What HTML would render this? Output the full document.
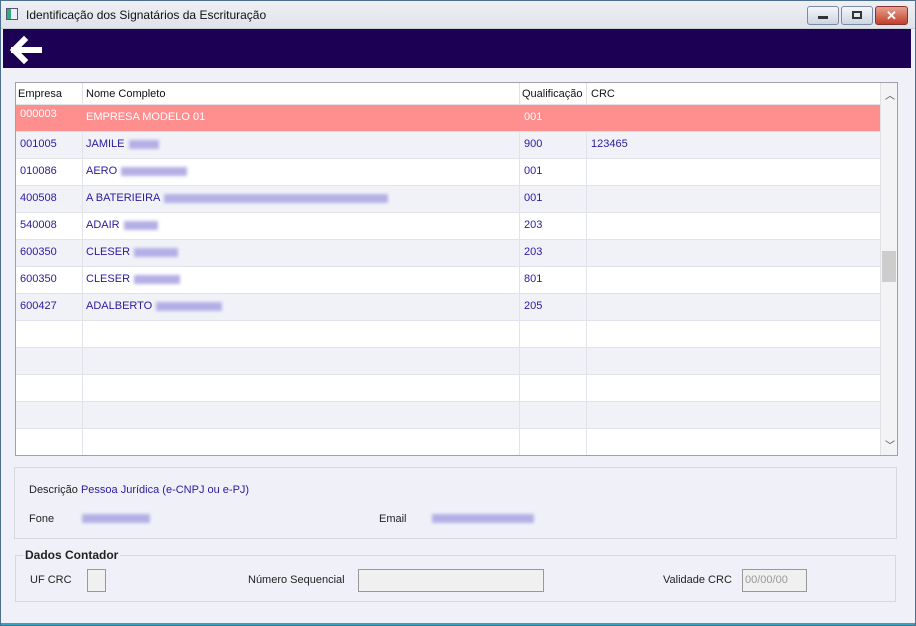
<!DOCTYPE html><html><head><style>
*{margin:0;padding:0;box-sizing:border-box}
body{width:916px;height:626px;overflow:hidden;font-family:"Liberation Sans",sans-serif;font-size:11px;background:#6a8fb0;position:relative}
.win{position:absolute;left:0;top:0;width:916px;height:626px;background:#f0f1f8;box-shadow:inset 0 0 0 1px #4a6f90,inset 0 -3px 0 #3aa0c0}
.title{position:absolute;left:1px;top:1px;width:914px;height:28px;background:linear-gradient(#eef0f4,#dfe3ea);border-bottom:1px solid #c8ccd4}
.title span{position:absolute;left:25px;top:7px;font-size:12px;color:#111}
.ico{position:absolute;left:5px;top:7px;width:12px;height:12px;border:1px solid #557;background:linear-gradient(90deg,#3a7 0 40%,#eef 40%)}
.btn{position:absolute;top:5px;height:19px;border:1px solid #7a8aa0;border-radius:3px;background:linear-gradient(#f4f6fa,#cdd5e2)}
.hdr{position:absolute;left:3px;top:29px;width:908px;height:39px;background:#1b0053}
.tbl{position:absolute;left:15px;top:82px;width:883px;height:374px;border:1px solid #a0a0a8;background:#fff;overflow:hidden}
.row{position:absolute;left:0;width:864px;height:27px;border-bottom:1px solid #e2e2ea;color:#2a1aa0}
.row div{position:absolute;top:0;height:27px;line-height:25px;padding-left:4px;border-right:1px solid #e2e2ea}
.c1{left:0;width:67px}.c2{left:67px;width:437px;padding-left:3px!important}.c3{left:504px;width:67px}.c4{left:571px;width:293px;border-right:none!important}
.th{color:#111;height:22px}.th div{line-height:22px;height:22px}
.blur{display:inline-block;height:9px;background:#b4b0e6;filter:blur(1.5px);vertical-align:middle;margin-left:4px}
.sb{position:absolute;left:864px;top:0;width:17px;height:372px;background:#f3f3f6;border-left:1px solid #e0e0e6}
.grp{position:absolute;border:1px solid #d6d8e0}
.lbl{position:absolute;color:#222}
.inp{position:absolute;border:1px solid #999;background:#f0f0f0;color:#999;line-height:20px;padding-left:2px}
</style></head><body><div class="win">
<div class="title"><div class="ico"></div><span>Identificação dos Signatários da Escrituração</span>
<div class="btn" style="left:806px;width:32px"><div style="position:absolute;left:10px;top:9px;width:10px;height:3px;background:#333"></div></div>
<div class="btn" style="left:840px;width:32px"><div style="position:absolute;left:10px;top:4px;width:10px;height:8px;border:2px solid #333"></div></div>
<div class="btn" style="left:874px;width:33px;background:linear-gradient(#e8a090,#c0402a);border-color:#833;color:#fff;text-align:center;font-weight:bold;font-size:13px;line-height:17px">✕</div>
</div>
<div class="hdr"><svg width="40" height="39" style="position:absolute;left:6px;top:0"><path d="M5 21 L15 11 M5 21 L15 31 M5 21 H30" stroke="#fff" stroke-width="6" fill="none" stroke-linecap="square"/></svg></div>
<div class="tbl">
<div class="row th" style="top:0"><div class="c1" style="padding-left:2px">Empresa</div><div class="c2">Nome Completo</div><div class="c3" style="padding-left:2px">Qualificação</div><div class="c4">CRC</div></div>
<div class="row" style="top:22px;height:27px;background:#ff8f8f;color:#fff"><div class="c1" style="line-height:18px;border:none">000003</div><div class="c2" style="border:none">EMPRESA MODELO 01</div><div class="c3" style="border:none">001</div><div class="c4"></div></div>
<div class="row" style="top:49px;background:#f1f2f8"><div class="c1">001005</div><div class="c2">JAMILE<span class="blur" style="width:30px"></span></div><div class="c3">900</div><div class="c4">123465</div></div>
<div class="row" style="top:76px"><div class="c1">010086</div><div class="c2">AERO<span class="blur" style="width:66px"></span></div><div class="c3">001</div><div class="c4"></div></div>
<div class="row" style="top:103px;background:#f1f2f8"><div class="c1">400508</div><div class="c2">A BATERIEIRA<span class="blur" style="width:224px"></span></div><div class="c3">001</div><div class="c4"></div></div>
<div class="row" style="top:130px"><div class="c1">540008</div><div class="c2">ADAIR<span class="blur" style="width:34px"></span></div><div class="c3">203</div><div class="c4"></div></div>
<div class="row" style="top:157px;background:#f1f2f8"><div class="c1">600350</div><div class="c2">CLESER<span class="blur" style="width:44px"></span></div><div class="c3">203</div><div class="c4"></div></div>
<div class="row" style="top:184px"><div class="c1">600350</div><div class="c2">CLESER<span class="blur" style="width:46px"></span></div><div class="c3">801</div><div class="c4"></div></div>
<div class="row" style="top:211px;background:#f1f2f8"><div class="c1">600427</div><div class="c2">ADALBERTO<span class="blur" style="width:66px"></span></div><div class="c3">205</div><div class="c4"></div></div>
<div class="row" style="top:238px"><div class="c1"></div><div class="c2"></div><div class="c3"></div><div class="c4"></div></div>
<div class="row" style="top:265px;background:#f1f2f8"><div class="c1"></div><div class="c2"></div><div class="c3"></div><div class="c4"></div></div>
<div class="row" style="top:292px"><div class="c1"></div><div class="c2"></div><div class="c3"></div><div class="c4"></div></div>
<div class="row" style="top:319px;background:#f1f2f8"><div class="c1"></div><div class="c2"></div><div class="c3"></div><div class="c4"></div></div>
<div class="row" style="top:346px"><div class="c1"></div><div class="c2"></div><div class="c3"></div><div class="c4"></div></div>
<div class="sb"><div style="position:absolute;left:4px;top:4px;font-size:10px;color:#444">︿</div><div style="position:absolute;left:1px;top:168px;width:14px;height:31px;background:#cdcdcd"></div><div style="position:absolute;left:4px;top:354px;font-size:10px;color:#444">﹀</div></div>
</div>
<div class="grp" style="left:14px;top:467px;width:883px;height:72px"></div>
<div class="lbl" style="left:29px;top:484px">Descrição <span style="color:#2a1aa0">Pessoa Jurídica (e-CNPJ ou e-PJ)</span></div>
<div class="lbl" style="left:29px;top:513px">Fone</div><span class="blur" style="position:absolute;left:78px;top:514px;width:68px"></span>
<div class="lbl" style="left:379px;top:513px">Email</div><span class="blur" style="position:absolute;left:428px;top:514px;width:102px"></span>
<div class="grp" style="left:15px;top:555px;width:881px;height:47px"></div>
<div class="lbl" style="left:23px;top:548px;font-weight:bold;font-size:12px;background:#f0f1f8;padding:0 2px">Dados Contador</div>
<div class="lbl" style="left:30px;top:574px">UF CRC</div><div class="inp" style="left:87px;top:569px;width:19px;height:23px"></div>
<div class="lbl" style="left:248px;top:574px">Número Sequencial</div><div class="inp" style="left:358px;top:569px;width:186px;height:23px"></div>
<div class="lbl" style="left:663px;top:574px">Validade CRC</div><div class="inp" style="left:742px;top:569px;width:65px;height:23px">00/00/00</div>
</div></body></html>
